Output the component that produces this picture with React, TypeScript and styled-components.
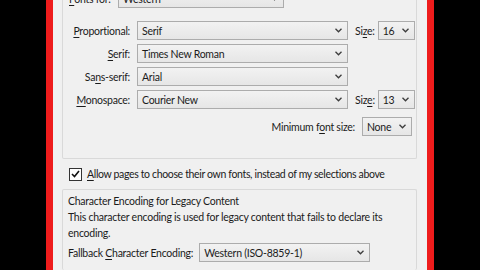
import styled, { createGlobalStyle } from 'styled-components'

const GlobalStyle = createGlobalStyle`
  html, body {
    margin: 0;
    padding: 0;
    background: #000;
    overflow: hidden;
  }
  body {
    font-family: Lato, 'Noto Sans', sans-serif;
    font-size: 10.5px;
    letter-spacing: -0.25px;
    color: #1b1b1b;
  }
`

const Frame = styled.div`
  display: flex;
  width: 480px;
  height: 270px;
  overflow: hidden;
`

const Side = styled.div`
  width: 46px;
  background: #000;
  flex: none;
`

const RedEdge = styled.div`
  width: 7px;
  background: #ee1c1c;
  flex: none;
`

const Dialog = styled.div`
  flex: 1;
  background: #f0f0f0;
  padding: 0 10px 0 9px;
  display: flex;
  flex-direction: column;
  overflow: hidden;
`

const Group = styled.div<{ $open?: 'top' | 'bottom' }>`
  border: 1px solid #d9d9d9;
  border-top-width: ${(p) => (p.$open === 'top' ? 0 : 1)}px;
  border-bottom-width: ${(p) => (p.$open === 'bottom' ? 0 : 1)}px;
  border-radius: 2px;
  display: flex;
  flex-direction: column;
`

const FontsGroup = styled(Group)`
  margin-top: -11px;
  padding: 0 4px 18px 6px;
  height: 170px;
  box-sizing: border-box;
`

const TopRow = styled.div`
  display: grid;
  grid-template-columns: 43px 166px;
  column-gap: 6px;
  align-items: center;
`

const FontGrid = styled.div`
  display: grid;
  grid-template-columns: 61px 211px 1fr;
  column-gap: 7px;
  row-gap: 4px;
  margin-top: 13px;
  align-items: center;
`

const Label = styled.span<{ $left?: boolean }>`
  text-align: ${(p) => (p.$left ? 'left' : 'right')};
  white-space: nowrap;
`

const SizeCell = styled.div`
  display: flex;
  align-items: center;
  justify-content: flex-end;
  gap: 3px;
`

const MinRow = styled.div`
  display: flex;
  align-items: center;
  justify-content: flex-end;
  gap: 7px;
  margin-top: 8px;
`

const Select = styled.div<{ $w: number }>`
  width: ${(p) => p.$w}px;
  height: 19px;
  box-sizing: border-box;
  border: 1px solid #acacac;
  background: linear-gradient(#f2f2f2, #e6e6e6);
  display: flex;
  align-items: center;
  justify-content: space-between;
  padding: 0 5px 0 4px;
  white-space: nowrap;
  flex: none;
`

const CheckRow = styled.label`
  display: flex;
  align-items: center;
  gap: 5px;
  height: 30px;
  padding-left: 7px;
  white-space: nowrap;
  letter-spacing: -0.35px;
`

const Box = styled.span`
  width: 11px;
  height: 11px;
  border: 1px solid #333;
  background: #fff;
  display: flex;
  align-items: center;
  justify-content: center;
`

const EncodingGroup = styled(Group)`
  padding: 3px 6px 0 5px;
  flex: 1;
`

const Caption = styled.div`
  line-height: 16px;
`

const Desc = styled.div`
  line-height: 16px;
  width: 330px;
`

const FallbackRow = styled.div`
  display: flex;
  align-items: center;
  gap: 6px;
  margin-top: 2px;
`

const Chevron = () => (
  <svg width="7" height="5" viewBox="0 0 7 5">
    <path d="M0.5 0.8 L3.5 3.8 L6.5 0.8" fill="none" stroke="#3c3c3c" strokeWidth="1.3" />
  </svg>
)

const Combo = ({ w, value }: { w: number; value: string }) => (
  <Select $w={w}>
    <span>{value}</span>
    <Chevron />
  </Select>
)

// underlines the access key letter
const K = styled.span`
  text-decoration: underline;
  text-underline-offset: 2px;
`

export default function App() {
  return (
    <>
      <GlobalStyle />
      <Frame>
        <Side />
        <RedEdge />
        <Dialog>
          <FontsGroup $open="top">
            <TopRow>
              <Label $left>
                <K>F</K>onts for:
              </Label>
              <Combo w={166} value="Western" />
            </TopRow>
            <FontGrid>
              <Label>
                <K>P</K>roportional:
              </Label>
              <Combo w={211} value="Serif" />
              <SizeCell>
                <span>
                  Si<K>z</K>e:
                </span>
                <Combo w={37} value="16" />
              </SizeCell>

              <Label>
                <K>S</K>erif:
              </Label>
              <Combo w={211} value="Times New Roman" />
              <span />

              <Label>
                Sa<K>n</K>s-serif:
              </Label>
              <Combo w={211} value="Arial" />
              <span />

              <Label>
                <K>M</K>onospace:
              </Label>
              <Combo w={211} value="Courier New" />
              <SizeCell>
                <span>
                  Siz<K>e</K>:
                </span>
                <Combo w={37} value="13" />
              </SizeCell>
            </FontGrid>
            <MinRow>
              <span>
                Minimum f<K>o</K>nt size:
              </span>
              <Combo w={50} value="None" />
            </MinRow>
          </FontsGroup>

          <CheckRow>
            <Box>
              <svg width="9" height="8" viewBox="0 0 9 8">
                <path d="M1 4 L3.5 6.5 L8 1" fill="none" stroke="#111" strokeWidth="1.6" />
              </svg>
            </Box>
            <span>
              <K>A</K>llow pages to choose their own fonts, instead of my selections above
            </span>
          </CheckRow>

          <EncodingGroup $open="bottom">
            <Caption>Character Encoding for Legacy Content</Caption>
            <Desc>
              This character encoding is used for legacy content that fails to declare its
              encoding.
            </Desc>
            <FallbackRow>
              <span>
                Fallback <K>C</K>haracter Encoding:
              </span>
              <Combo w={171} value="Western (ISO-8859-1)" />
            </FallbackRow>
          </EncodingGroup>
        </Dialog>
        <RedEdge />
        <Side />
      </Frame>
    </>
  )
}
